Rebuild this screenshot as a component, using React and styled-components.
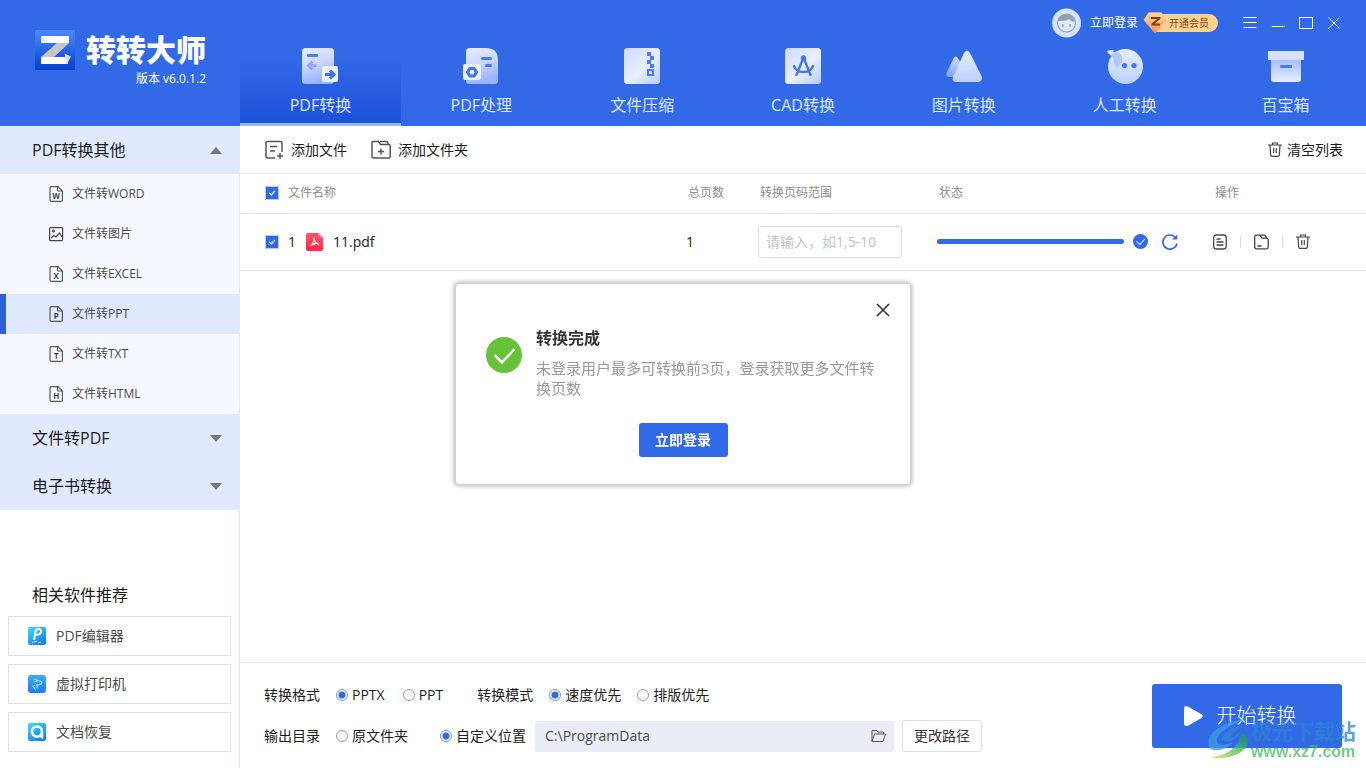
import React, { useState } from "react"
import styled, { createGlobalStyle } from "styled-components"

const GlobalStyle = createGlobalStyle`
  :root {
    --clr-primary: #3269e6;
    --clr-group: #e0e9ff;
    --clr-item: #f5f8ff;
    --clr-line: #e4e6ea;
    --txt-dark: #1c1c1c;
    --txt-mid: #4a4a4a;
    --txt-muted: #8c8c8c;
  }

  * {
    box-sizing: border-box;
  }

  body {
    margin: 0;
    background: #fff;
    color: var(--txt-dark);
    font-family: "Open Sans", "Noto Sans CJK SC", sans-serif;
    font-size: 14px;
    line-height: 20px;
  }

  button,
  input {
    font: inherit;
    color: inherit;
  }

  button {
    border: 0;
    padding: 0;
    background: none;
    cursor: pointer;
  }

  svg {
    display: block;
    flex: none;
  }

  h1,
  h2,
  p {
    margin: 0;
  }
`

const Page = styled.div`
  display: flex;
  flex-direction: column;
  min-height: 100vh;
`

/* ---------- header ---------- */

const Header = styled.header`
  display: flex;
  background: var(--clr-primary);
  color: #fff;
`

const Brand = styled.div`
  display: flex;
  align-items: flex-start;
  gap: 11px;
  width: 240px;
  padding: 30px 0 0 35px;
`

const BrandText = styled.div`
  display: flex;
  flex-direction: column;
  align-items: flex-end;
`

const BrandName = styled.h1`
  font-size: 30px;
  font-weight: 900;
  line-height: 39px;
`

const Version = styled.p`
  font-size: 12px;
`

const HeaderMain = styled.div`
  flex: 1;
  display: flex;
  flex-direction: column;
`

const TopBar = styled.div`
  display: flex;
  align-items: center;
  justify-content: flex-end;
  height: 46px;
  padding-right: 24px;
`

const Login = styled.button`
  display: flex;
  align-items: center;
  gap: 9px;
  font-size: 12px;
`

const VipBadge = styled.button`
  display: flex;
  align-items: center;
  gap: 1px;
  margin: 0 24px 0 5px;
`

const VipLabel = styled.span`
  height: 18px;
  margin-left: -12px;
  padding: 0 9px 0 13px;
  border-radius: 0 9px 9px 0;
  background: #ffd08f;
  color: #7d4a14;
  font-size: 10px;
  line-height: 18px;
`

const Gem = styled.svg`
  position: relative;
  z-index: 1;
`

const WindowControls = styled.div`
  display: flex;
  gap: 12px;
`

const Tabs = styled.nav`
  display: grid;
  grid-template-columns: repeat(7, 1fr);
`

const Tab = styled.button`
  display: flex;
  flex-direction: column;
  align-items: center;
  gap: 9px;
  height: 80px;
  padding-top: 2px;
  border-bottom: 3px solid ${props => (props.$active ? "#9db7fb" : "transparent")};
  background: ${props =>
    props.$active
      ? "linear-gradient(to bottom, #3269e6 15%, #1b52d9 100%)"
      : "none"};
  background-clip: padding-box;
  color: #dce7ff;
  font-size: 16px;
  line-height: 24px;
`

/* ---------- sidebar ---------- */

const Body = styled.div`
  flex: 1;
  display: flex;
`

const Sidebar = styled.aside`
  display: flex;
  flex-direction: column;
  width: 240px;
  border-right: 1px solid var(--clr-group);
`

const Group = styled.button`
  display: flex;
  align-items: center;
  justify-content: space-between;
  height: 48px;
  padding: 0 17px 0 32px;
  background: var(--clr-group);
  font-size: 16px;
`

const Item = styled.a`
  display: flex;
  align-items: center;
  gap: 8px;
  height: 40px;
  padding-left: 42px;
  border-left: 6px solid ${props => (props.$active ? "#2d60d8" : "transparent")};
  background: ${props => (props.$active ? "var(--clr-group)" : "var(--clr-item)")};
  background-clip: ${props => (props.$active ? "padding-box" : "border-box")};
  color: var(--txt-mid);
  font-size: 12px;
  text-decoration: none;
`

const Related = styled.section`
  display: flex;
  flex-direction: column;
  gap: 8px;
  margin-top: auto;
  padding: 0 8px 16px;
`

const RelatedTitle = styled.h2`
  padding: 0 24px 3px;
  font-size: 16px;
  font-weight: 400;
`

const RelatedCard = styled.a`
  display: flex;
  align-items: center;
  gap: 10px;
  height: 40px;
  padding-left: 19px;
  border: 1px solid #e2e2e2;
  color: var(--txt-mid);
  text-decoration: none;
`

/* ---------- main ---------- */

const Main = styled.main`
  flex: 1;
  display: flex;
  flex-direction: column;
`

const Toolbar = styled.div`
  display: flex;
  align-items: center;
  gap: 24px;
  height: 48px;
  padding: 0 23px 0 24px;
  border-bottom: 1px solid var(--clr-group);
`

const ToolButton = styled.button`
  display: flex;
  align-items: center;
  gap: ${props => (props.$end ? "5px" : "7px")};
  margin-left: ${props => (props.$end ? "auto" : "0")};
`

const Table = styled.table`
  width: 100%;
  table-layout: fixed;
  border-collapse: collapse;

  tr {
    border-bottom: 1px solid var(--clr-line);
  }
`

const Th = styled.th`
  width: ${props => props.$width || "auto"};
  height: 39px;
  padding: 0 0 0 ${props => (props.$first ? "26px" : "2px")};
  color: var(--txt-muted);
  font-size: 12px;
  font-weight: 400;
  text-align: left;
`

const Td = styled.td`
  height: 57px;
  padding: 0 0 0 ${props => (props.$first ? "26px" : "0")};
`

const Cell = styled.div`
  display: flex;
  align-items: center;
  gap: ${props => props.$gap || "10px"};
`

const Checkbox = styled.input.attrs({ type: "checkbox" })`
  appearance: none;
  width: 12px;
  height: 12px;
  margin: 0;
  background: #fff;
  outline: 1px solid #b9cdf8;

  &:checked {
    background: var(--clr-primary)
      url("data:image/svg+xml,%3Csvg xmlns='http://www.w3.org/2000/svg' viewBox='0 0 12 12'%3E%3Cpath d='M3.2 5.8l2.1 2.1 3.6-3.9' fill='none' stroke='white' stroke-width='1.2'/%3E%3C/svg%3E");
  }
`

const RangeInput = styled.input`
  width: 144px;
  height: 32px;
  padding: 0 7px;
  border: 1px solid #dcdfe6;
  border-radius: 3px;
  background: #fff;

  &::placeholder {
    color: #bfc3cb;
    opacity: 1;
  }
`

const Track = styled.div`
  width: 187px;
  height: 5px;
  border-radius: 3px;
  background: #e0e9ff;
`

const Fill = styled.div`
  height: 5px;
  border-radius: 3px;
  background: var(--clr-primary);
`

const Divider = styled.span`
  width: 1px;
  height: 12px;
  background: #dcdcdc;
`

/* ---------- footer ---------- */

const Footer = styled.footer`
  display: flex;
  align-items: center;
  justify-content: space-between;
  margin-top: auto;
  padding: 16px 24px;
  border-top: 1px solid #dfe0e4;
`

const Settings = styled.div`
  display: flex;
  flex-direction: column;
  gap: 9px;
`

const SettingRow = styled.div`
  display: flex;
  align-items: center;
  height: 32px;
`

const RadioGroup = styled.div`
  display: flex;
  align-items: center;
  gap: ${props => props.$gap || "16px"};
  margin-right: ${props => props.$end || "32px"};
`

const RadioLabel = styled.label`
  display: flex;
  align-items: center;
  gap: 4px;
`

const Radio = styled.input.attrs({ type: "radio" })`
  appearance: none;
  width: 12px;
  height: 12px;
  margin: 0;
  border: 1px solid #9a9a9a;
  border-radius: 50%;
  background: #fff;

  &:checked {
    border-color: #6e94ee;
    background: radial-gradient(circle, var(--clr-primary) 3px, #fff 4px);
  }
`

const PathField = styled.div`
  display: flex;
  align-items: center;
  width: 359px;
  height: 31px;
  padding: 0 8px 0 10px;
  border-radius: 3px;
  background: #eaedf5;
`

const PathInput = styled.input`
  flex: 1;
  min-width: 0;
  padding: 0;
  border: 0;
  background: none;
  color: var(--txt-mid);
`

const ChangeButton = styled.button`
  width: 80px;
  height: 32px;
  margin-left: 8px;
  border: 1px solid #dcdfe6;
  border-radius: 3px;
  background: #fff;
  color: #333;
`

const StartButton = styled.button`
  display: flex;
  align-items: center;
  justify-content: center;
  gap: 14px;
  width: 190px;
  height: 64px;
  padding-right: 14px;
  border-radius: 3px;
  background: var(--clr-primary);
  color: #fff;
  font-size: 20px;
  font-weight: 300;
`

/* ---------- dialog ---------- */

const Overlay = styled.div`
  position: fixed;
  inset: 0;
  display: flex;
  align-items: center;
  justify-content: center;
  pointer-events: none;
`

const Dialog = styled.section`
  display: flex;
  flex-direction: column;
  width: 456px;
  padding: 18px 19px 27px 30px;
  border: 1px solid #d0d0d0;
  border-radius: 4px;
  background: #fff;
  box-shadow: 0 0 4px 1px rgba(0, 0, 0, 0.3);
  pointer-events: auto;
`

const CloseButton = styled.button`
  align-self: flex-end;
`

const DialogContent = styled.div`
  display: flex;
  gap: 14px;
  padding: 10px 10px 0 0;

  svg {
    margin-top: 9px;
  }
`

const DialogTitle = styled.h2`
  margin-bottom: 10px;
  color: #333;
  font-size: 16px;
  font-weight: 700;
`

const DialogText = styled.p`
  color: #999;
  font-size: 15px;
`

const DialogButton = styled.button`
  align-self: center;
  width: 89px;
  height: 34px;
  margin: 25px 0 0 -11px;
  border-radius: 3px;
  background: var(--clr-primary);
  color: #fff;
  font-weight: 700;
`

/* ---------- site mark ---------- */

const SiteMark = styled.div`
  position: fixed;
  right: 10px;
  bottom: 8px;
  display: flex;
  align-items: flex-end;
  pointer-events: none;
`

const SiteMarkText = styled.div`
  display: flex;
  flex-direction: column;
  color: #2f83cf;
  font-size: 21px;
  font-weight: 700;
  line-height: 24px;
  opacity: 0.75;
`

const SiteMarkUrl = styled.span`
  color: #3fbf62;
  font-family: "Liberation Sans", sans-serif;
  font-size: 16px;
  line-height: 17px;
`

/* ---------- icons ---------- */

const Gradients = () => (
  <svg width="0" height="0" style={{ position: "absolute" }} aria-hidden="true">
    <defs>
      <linearGradient id="fade" x1="0" y1="0" x2="0.3" y2="1">
        <stop offset="0" stopColor="#e6edff" />
        <stop offset="0.5" stopColor="#ccd9ff" />
        <stop offset="1" stopColor="#98b4ff" />
      </linearGradient>
      <linearGradient id="shine" x1="0" y1="0" x2="1" y2="1">
        <stop offset="0" stopColor="#cddaff" />
        <stop offset="0.55" stopColor="#e9efff" />
        <stop offset="1" stopColor="#b9cbff" />
      </linearGradient>
      <linearGradient id="soft" x1="0" y1="0" x2="0" y2="1">
        <stop offset="0" stopColor="#e6eeff" />
        <stop offset="1" stopColor="#bccfff" />
      </linearGradient>
      <linearGradient id="rise" x1="0" y1="0" x2="0" y2="1">
        <stop offset="0" stopColor="#a9c0ff" />
        <stop offset="1" stopColor="#e6edff" />
      </linearGradient>
      <linearGradient id="back" x1="0" y1="0" x2="0" y2="1">
        <stop offset="0" stopColor="#cfdcff" />
        <stop offset="1" stopColor="#7fa2fb" />
      </linearGradient>
      <linearGradient id="logo" x1="0" y1="0" x2="0" y2="1">
        <stop offset="0" stopColor="#4a8bff" />
        <stop offset="1" stopColor="#0340cf" />
      </linearGradient>
      <linearGradient id="gem" x1="0" y1="0" x2="0.4" y2="1">
        <stop offset="0" stopColor="#ffd9a0" />
        <stop offset="1" stopColor="#ff9152" />
      </linearGradient>
      <linearGradient id="pdf" x1="0" y1="0" x2="0" y2="1">
        <stop offset="0" stopColor="#ff5468" />
        <stop offset="1" stopColor="#fb2549" />
      </linearGradient>
      <linearGradient id="cyan" x1="0" y1="0" x2="0.6" y2="1">
        <stop offset="0" stopColor="#3fdcf8" />
        <stop offset="1" stopColor="#1484ee" />
      </linearGradient>
      <linearGradient id="azure" x1="0" y1="0" x2="0" y2="1">
        <stop offset="0" stopColor="#3cacfb" />
        <stop offset="1" stopColor="#1a7dfa" />
      </linearGradient>
      <linearGradient id="swoosh" x1="0" y1="1" x2="1" y2="0">
        <stop offset="0" stopColor="#d9e64a" />
        <stop offset="0.6" stopColor="#3fb56a" />
        <stop offset="1" stopColor="#12827e" />
      </linearGradient>
    </defs>
  </svg>
)

const LogoIcon = () => (
  <svg width="40" height="40" viewBox="0 0 40 40">
    <rect width="40" height="40" rx="1.500" fill="url(#logo)" />
    <path d="M22 13h12L19 27H6z" fill="#c6c6c6" />
    <path d="M6 6h28v7H6zM6 27h25l2 7H6z" fill="#fff" />
    <path d="M29.500 23.500l6.500 3-4 7.500z" fill="#dcdcdc" />
  </svg>
)

const AvatarIcon = () => (
  <svg width="29" height="30" viewBox="0 0 29 30">
    <circle cx="14.500" cy="15" r="14.500" fill="#d6e2fb" />
    <circle cx="14.500" cy="15" r="9" fill="#dfe8fa" stroke="#93a3bb" strokeWidth="1.200" />
    <path d="M6 13c0-4 4-7 8.500-7s8.500 3 8.500 8c-3-.5-5-2-6-3-3 2-7 2-11 2z" fill="#8fa0b6" />
    <path d="M11 16v3M18 16v3" stroke="#93a3bb" strokeWidth="1.400" />
  </svg>
)

const GemIcon = () => (
  <Gem width="24" height="22" viewBox="0 0 24 22">
    <path d="M5.500 0.500h13l5 7L12 21.500 0.500 8z" fill="url(#gem)" />
    <path d="M5.500 0.500h13l5 7-8 4z" fill="#ffd79c" opacity="0.600" />
    <path d="M8 6h9.500M17 6l-7.500 6M8.500 12.500H17" fill="none" stroke="#7a4313" strokeWidth="2" />
  </Gem>
)

const ConvertIcon = () => (
  <svg width="36" height="36" viewBox="0 0 36 36">
    <rect width="32" height="36" rx="3.500" fill="url(#fade)" />
    <rect x="5" y="6" width="11" height="3" rx="1" fill="#4f7df0" />
    <path d="M14.500 17.500H7M10.500 13.500l-4 4 4 4" fill="none" stroke="#8caaf8" strokeWidth="3" />
    <rect x="20" y="18" width="16" height="16" rx="2" fill="#e9f0ff" />
    <path d="M23 26.500h8M28 22.500l4 4-4 4" fill="none" stroke="#3f70ea" strokeWidth="3" />
  </svg>
)

const ProcessIcon = () => (
  <svg width="36" height="36" viewBox="0 0 36 36">
    <path d="M6.500 0H23q12 0 12 12v20.500q0 3.500-3.500 3.500H6.500Q3 36 3 32.500v-29Q3 0 6.500 0z" fill="url(#fade)" />
    <path d="M19.500 10.500h8M23.500 17.500h4" stroke="#4a7af0" strokeWidth="3" strokeLinecap="round" />
    <rect y="16" width="18" height="16" rx="2" fill="#e9f0ff" />
    <path d="M6.800 20.500h4.400l2.300 3.700-2.300 3.700H6.800l-2.300-3.700z" fill="none" stroke="#3f73ef" strokeWidth="3" strokeLinejoin="round" />
  </svg>
)

const ZipIcon = () => (
  <svg width="36" height="36" viewBox="0 0 36 36">
    <rect width="36" height="36" rx="3.500" fill="url(#shine)" />
    <path d="M23 4h4v4h-4zM26 8h4v4h-4zM23 12h4v4h-4zM26 16h4v4h-4z" fill="#4a7cf2" />
    <rect x="24" y="22" width="5" height="5" fill="none" stroke="#4a7cf2" strokeWidth="2" />
  </svg>
)

const CadIcon = () => (
  <svg width="36" height="36" viewBox="0 0 36 36">
    <rect width="36" height="36" rx="3.500" fill="url(#shine)" />
    <g fill="none" stroke="#4377ee" strokeWidth="2.400" strokeLinecap="round">
      <circle cx="18.500" cy="10" r="1.500" fill="#4377ee" />
      <path d="M17.500 12l-6 15M19.500 12l6 15M9 18c3 8 16 8 19 0" />
    </g>
  </svg>
)

const ImageTabIcon = () => (
  <svg width="36" height="36" viewBox="0 0 36 36">
    <path d="M7.500 10.500q1.500-3 3.500-1.500l4 6-6 14H3q-3.500-.5-2.500-4z" fill="url(#back)" />
    <path d="M18 5q3-5 6 0l11.500 23q1.500 5-3 6H10q-4.500-.5-3-5z" fill="url(#soft)" />
  </svg>
)

const ServiceIcon = () => (
  <svg width="36" height="36" viewBox="0 0 36 36">
    <circle cx="18.500" cy="18.500" r="17.500" fill="url(#soft)" />
    <path d="M0 3c5 2 13-2 15 6 1 6-3 11-6 10-3-3-1-9-5-12-2-1-4-2-4-4z" fill="#b3c8ff" />
    <path d="M0 3c2-1 5-1 7-1L4 8z" fill="#dfe8ff" />
    <circle cx="17.500" cy="17.500" r="2.600" fill="#4577ee" />
    <circle cx="27" cy="17.500" r="2.600" fill="#4577ee" />
  </svg>
)

const BoxIcon = () => (
  <svg width="36" height="36" viewBox="0 0 36 36">
    <path d="M3 12h30v19q0 3-3 3H6q-3 0-3-3z" fill="url(#rise)" />
    <rect y="3" width="36" height="9" fill="#d5e1ff" />
    <rect x="12" y="17" width="12" height="3" rx="1" fill="#4a7af0" />
  </svg>
)

const DocIcon = ({ letter }) => (
  <svg width="16" height="16" viewBox="0 0 16 16" fill="none" stroke="#555" strokeWidth="1.200">
    <path d="M3.500.6H10L14.400 5v8.900q0 1.500-1.500 1.500H3.500q-1.500 0-1.500-1.500V2.100Q2 .6 3.500.6z" />
    <path d="M9.500.8V4q0 1 1 1h3.700" />
    <text x="8.200" y="12.700" textAnchor="middle" fontSize="8" fontWeight="700" fill="#444" stroke="none">
      {letter}
    </text>
  </svg>
)

const PictureIcon = () => (
  <svg width="16" height="16" viewBox="0 0 16 16" fill="none" stroke="#444" strokeWidth="1.200">
    <rect x="1.600" y="1.600" width="13" height="13" rx="1" />
    <circle cx="5.500" cy="5" r="1" />
    <path d="M3 12l3-2.500 2 1.500 3.500-4L14 11" />
  </svg>
)

const Caret = ({ up }) => (
  <svg width="12" height="7" viewBox="0 0 12 7">
    <path d={up ? "M6 0l6 7H0z" : "M0 0h12L6 7z"} fill="#777" />
  </svg>
)

const EditorIcon = () => (
  <svg width="18" height="18" viewBox="0 0 18 18">
    <rect width="18" height="18" rx="2" fill="url(#cyan)" />
    <path d="M6 13L7.500 4q.5-2 3-2 3 .3 2.500 3-.8 3-5 2.600" fill="none" stroke="#fff" strokeWidth="2" />
    <path d="M4 16c2-1 4-2 5-1.500M10 16l3-1" stroke="#fff" strokeWidth="0.800" fill="none" />
  </svg>
)

const PrinterIcon = () => (
  <svg width="18" height="18" viewBox="0 0 18 18">
    <rect width="18" height="18" rx="3" fill="url(#azure)" />
    <path d="M6 4l7 2.500q2 1.500-1 3L8 10.500M5.500 7l4-1M7 10l-2 1 2.500 4M9 9v4.500" fill="none" stroke="#a8dcff" strokeWidth="1.200" />
  </svg>
)

const RecoverIcon = () => (
  <svg width="18" height="18" viewBox="0 0 18 18">
    <rect width="18" height="18" rx="2" fill="url(#cyan)" />
    <circle cx="9" cy="8.500" r="5" fill="none" stroke="#fff" strokeWidth="2.600" />
    <path d="M10 13l5.500-2-.5 5z" fill="#fff" />
  </svg>
)

const AddFileIcon = () => (
  <svg width="20" height="20" viewBox="0 0 20 20" fill="none" stroke="#555" strokeWidth="1.500">
    <path d="M11 18H4q-2 0-2-2V3q0-1.500 2-1.500h12.500q1.500 0 1.500 1.500v9" />
    <path d="M6 6.500h7M6 11h5M13 16h6M16 13v6" />
  </svg>
)

const AddFolderIcon = () => (
  <svg width="20" height="20" viewBox="0 0 20 20" fill="none" stroke="#555" strokeWidth="1.500">
    <path d="M1 2.500q0-1 1-1h5.500l2 3H18q1.200 0 1.200 1.500v10.500q0 1.500-1.200 1.500H2.500Q1 18 1 16.500z" />
    <path d="M9 1.500h7l1.500 3M7 11.500h6M10 8.500v6" />
  </svg>
)

const TrashIcon = () => (
  <svg width="14" height="15" viewBox="0 0 14 15" fill="none" stroke="#444" strokeWidth="1.200">
    <path d="M0 3h14M4.500 3V1h5v2M2 3l.7 10q0 1.400 1.300 1.400h6q1.300 0 1.300-1.400L12 3M5.700 6v5M8.300 6v5" />
  </svg>
)

const PdfIcon = () => (
  <svg width="17" height="18" viewBox="0 0 17 18">
    <path d="M2 0h10.500L17 4.500V16q0 2-2 2H2q-2 0-2-2V2q0-2 2-2z" fill="url(#pdf)" />
    <path d="M12.500 0L17 4.500h-3q-1.500 0-1.500-1.500z" fill="#ffb1ba" opacity="0.500" />
    <path d="M8 5c-1 1 1.500 5 4.500 6.500.5-2-4-1.500-8 1.300C6 12 9.500 8 8 5z" fill="none" stroke="#fff" strokeWidth="1.100" />
  </svg>
)

const DoneIcon = ({ size, fill }) => (
  <svg width={size} height={size} viewBox="0 0 36 36">
    <circle cx="18" cy="18" r="18" fill={fill} />
    <path d="M8.500 18l7.500 7.500L28.500 12" fill="none" stroke="#fff" strokeWidth="2.500" />
  </svg>
)

const RefreshIcon = () => (
  <svg width="16" height="16" viewBox="0 0 16 16" fill="none" stroke="#3269e6" strokeWidth="1.700">
    <path d="M15 9.500A7.100 7.100 0 1 1 13 3" />
    <path d="M15.200 0.500V5.500H10z" fill="#3269e6" stroke="none" />
  </svg>
)

const OpenFileIcon = () => (
  <svg width="14" height="16" viewBox="0 0 14 16" fill="none" stroke="#444" strokeWidth="1.300">
    <rect x="0.700" y="1" width="12.500" height="14" rx="2.500" />
    <path d="M3.500 5h4M3.500 8h7M3.500 11h7" />
  </svg>
)

const FolderIcon = () => (
  <svg width="15" height="16" viewBox="0 0 15 16" fill="none" stroke="#444" strokeWidth="1.300">
    <path d="M.7 3q0-1.800 1.500-1.800h3.500l2.300 3h4.500q1.700 0 1.700 1.600V13q0 1.800-1.700 1.800H2.500Q.7 14.800.7 13zM6 1.200h5l2 3M3.500 12h4" />
  </svg>
)

const OpenFolderIcon = () => (
  <svg width="15" height="14" viewBox="0 0 15 14" fill="none" stroke="#555" strokeWidth="1">
    <path d="M1 12.500V1.500h4.500L7 3h5.500v2M1 12.500L3.500 5h11L12 12.500z" />
  </svg>
)

const PlayIcon = () => (
  <svg width="19" height="20" viewBox="0 0 19 20">
    <path d="M0 3q0-4 4-2.500L17 8q3.500 2 0 4.200L4.500 19.500Q0 21 0 17z" fill="#fff" />
  </svg>
)

const SwooshIcon = () => (
  <svg width="44" height="42" viewBox="0 0 44 42" opacity="0.800">
    <path d="M2 28C-2 15 18 2 40 1 24 6 8 16 10 24c1 4 10 3 16 0-6 8-22 12-24 4z" fill="#3a9be0" />
    <path d="M14 22C20 10 32 6 40 8c-8 2-16 7-18 12 6-2 10-5 12-8-2 10-14 14-20 10z" fill="#2b86d8" />
    <path d="M4 39C20 38 34 28 34 14c10 4 9 14 0 20-8 5-20 8-30 5z" fill="url(#swoosh)" />
  </svg>
)

/* ---------- data ---------- */

const tabs = [
  { label: "PDF转换", Icon: ConvertIcon },
  { label: "PDF处理", Icon: ProcessIcon },
  { label: "文件压缩", Icon: ZipIcon },
  { label: "CAD转换", Icon: CadIcon },
  { label: "图片转换", Icon: ImageTabIcon },
  { label: "人工转换", Icon: ServiceIcon },
  { label: "百宝箱", Icon: BoxIcon },
]

const items = [
  { label: "文件转WORD", letter: "W" },
  { label: "文件转图片" },
  { label: "文件转EXCEL", letter: "X" },
  { label: "文件转PPT", letter: "P" },
  { label: "文件转TXT", letter: "T" },
  { label: "文件转HTML", letter: "H" },
]

const related = [
  { label: "PDF编辑器", Icon: EditorIcon },
  { label: "虚拟打印机", Icon: PrinterIcon },
  { label: "文档恢复", Icon: RecoverIcon },
]

const files = [{ id: 1, name: "11.pdf", pages: 1, progress: 100 }]

function Choices({ label, name, options, value, onChange, gap, end }) {
  return (
    <>
      <RadioGroup as="span" $end="16px">
        {label}
      </RadioGroup>
      <RadioGroup role="radiogroup" aria-label={label} $gap={gap} $end={end}>
        {options.map(option => (
          <RadioLabel key={option}>
            <Radio
              name={name}
              checked={value === option}
              onChange={() => onChange(option)}
            />
            {option}
          </RadioLabel>
        ))}
      </RadioGroup>
    </>
  )
}

export default function App() {
  const [tab, setTab] = useState("PDF转换")
  const [item, setItem] = useState("文件转PPT")
  const [format, setFormat] = useState("PPTX")
  const [mode, setMode] = useState("速度优先")
  const [output, setOutput] = useState("自定义位置")
  const [open, setOpen] = useState(true)

  return (
    <Page>
      <GlobalStyle />
      <Gradients />
      <Header>
        <Brand>
          <LogoIcon />
          <BrandText>
            <BrandName>转转大师</BrandName>
            <Version>版本 v6.0.1.2</Version>
          </BrandText>
        </Brand>
        <HeaderMain>
          <TopBar>
            <Login>
              <AvatarIcon />
              立即登录
            </Login>
            <VipBadge>
              <GemIcon />
              <VipLabel>开通会员</VipLabel>
            </VipBadge>
            <WindowControls>
              <button aria-label="菜单">
                <svg width="16" height="16" viewBox="0 0 16 16" stroke="#fff">
                  <path d="M1 2.500h14M1 7.500h14M1 12.500h14" />
                </svg>
              </button>
              <button aria-label="最小化">
                <svg width="16" height="16" viewBox="0 0 16 16" stroke="#fff">
                  <path d="M1 11.500h14" />
                </svg>
              </button>
              <button aria-label="最大化">
                <svg width="16" height="16" viewBox="0 0 16 16" stroke="#fff" fill="none">
                  <rect x="1.500" y="2.500" width="13" height="11" />
                </svg>
              </button>
              <button aria-label="关闭">
                <svg width="16" height="16" viewBox="0 0 16 16" stroke="#fff">
                  <path d="M2.500 2.500l11 11M13.500 2.500l-11 11" />
                </svg>
              </button>
            </WindowControls>
          </TopBar>
          <Tabs>
            {tabs.map(({ label, Icon }) => (
              <Tab key={label} $active={label === tab} onClick={() => setTab(label)}>
                <Icon />
                {label}
              </Tab>
            ))}
          </Tabs>
        </HeaderMain>
      </Header>

      <Body>
        <Sidebar>
          <Group>
            PDF转换其他
            <Caret up />
          </Group>
          {items.map(({ label, letter }) => (
            <Item
              key={label}
              href="#"
              $active={label === item}
              onClick={() => setItem(label)}
            >
              {letter ? <DocIcon letter={letter} /> : <PictureIcon />}
              {label}
            </Item>
          ))}
          <Group>
            文件转PDF
            <Caret />
          </Group>
          <Group>
            电子书转换
            <Caret />
          </Group>
          <Related>
            <RelatedTitle>相关软件推荐</RelatedTitle>
            {related.map(({ label, Icon }) => (
              <RelatedCard key={label} href="#">
                <Icon />
                {label}
              </RelatedCard>
            ))}
          </Related>
        </Sidebar>

        <Main>
          <Toolbar>
            <ToolButton>
              <AddFileIcon />
              添加文件
            </ToolButton>
            <ToolButton>
              <AddFolderIcon />
              添加文件夹
            </ToolButton>
            <ToolButton $end>
              <TrashIcon />
              清空列表
            </ToolButton>
          </Toolbar>

          <Table>
            <thead>
              <tr>
                <Th $first>
                  <Cell as="label">
                    <Checkbox defaultChecked />
                    文件名称
                  </Cell>
                </Th>
                <Th $width="72px">总页数</Th>
                <Th $width="179px">转换页码范围</Th>
                <Th $width="276px">状态</Th>
                <Th $width="153px">操作</Th>
              </tr>
            </thead>
            <tbody>
              {files.map(file => (
                <tr key={file.id}>
                  <Td $first>
                    <Cell as="label">
                      <Checkbox defaultChecked />
                      <span>{file.id}</span>
                      <PdfIcon />
                      {file.name}
                    </Cell>
                  </Td>
                  <Td>{file.pages}</Td>
                  <Td>
                    <RangeInput aria-label="转换页码范围" placeholder="请输入，如1,5-10" />
                  </Td>
                  <Td>
                    <Cell $gap="14px">
                      <Cell $gap="9px">
                        <Track>
                          <Fill style={{ width: `${file.progress}%` }} />
                        </Track>
                        <DoneIcon size={15} fill="#3269e6" />
                      </Cell>
                      <button aria-label="重新转换">
                        <RefreshIcon />
                      </button>
                    </Cell>
                  </Td>
                  <Td>
                    <Cell $gap="13px">
                      <button aria-label="打开文件">
                        <OpenFileIcon />
                      </button>
                      <Divider />
                      <button aria-label="打开文件夹">
                        <FolderIcon />
                      </button>
                      <Divider />
                      <button aria-label="删除">
                        <TrashIcon />
                      </button>
                    </Cell>
                  </Td>
                </tr>
              ))}
            </tbody>
          </Table>

          <Footer>
            <Settings>
              <SettingRow>
                <Choices
                  label="转换格式"
                  name="format"
                  options={["PPTX", "PPT"]}
                  value={format}
                  onChange={setFormat}
                  gap="18px"
                  end="34px"
                />
                <Choices
                  label="转换模式"
                  name="mode"
                  options={["速度优先", "排版优先"]}
                  value={mode}
                  onChange={setMode}
                />
              </SettingRow>
              <SettingRow>
                <Choices
                  label="输出目录"
                  name="output"
                  options={["原文件夹", "自定义位置"]}
                  value={output}
                  onChange={setOutput}
                  gap="32px"
                  end="9px"
                />
                <PathField>
                  <PathInput aria-label="输出路径" defaultValue="C:\ProgramData" />
                  <OpenFolderIcon />
                </PathField>
                <ChangeButton>更改路径</ChangeButton>
              </SettingRow>
            </Settings>
            <StartButton>
              <PlayIcon />
              开始转换
            </StartButton>
          </Footer>
        </Main>
      </Body>

      {open && (
        <Overlay>
          <Dialog role="dialog" aria-label="转换完成">
            <CloseButton aria-label="关闭" onClick={() => setOpen(false)}>
              <svg width="16" height="16" viewBox="0 0 16 16" stroke="#333" strokeWidth="1.600">
                <path d="M2 2l12 12M14 2L2 14" />
              </svg>
            </CloseButton>
            <DialogContent>
              <DoneIcon size={36} fill="#67c23a" />
              <div>
                <DialogTitle>转换完成</DialogTitle>
                <DialogText>未登录用户最多可转换前3页，登录获取更多文件转换页数</DialogText>
              </div>
            </DialogContent>
            <DialogButton>立即登录</DialogButton>
          </Dialog>
        </Overlay>
      )}

      <SiteMark>
        <SwooshIcon />
        <SiteMarkText>
          极光下载站
          <SiteMarkUrl>www.xz7.com</SiteMarkUrl>
        </SiteMarkText>
      </SiteMark>
    </Page>
  )
}
